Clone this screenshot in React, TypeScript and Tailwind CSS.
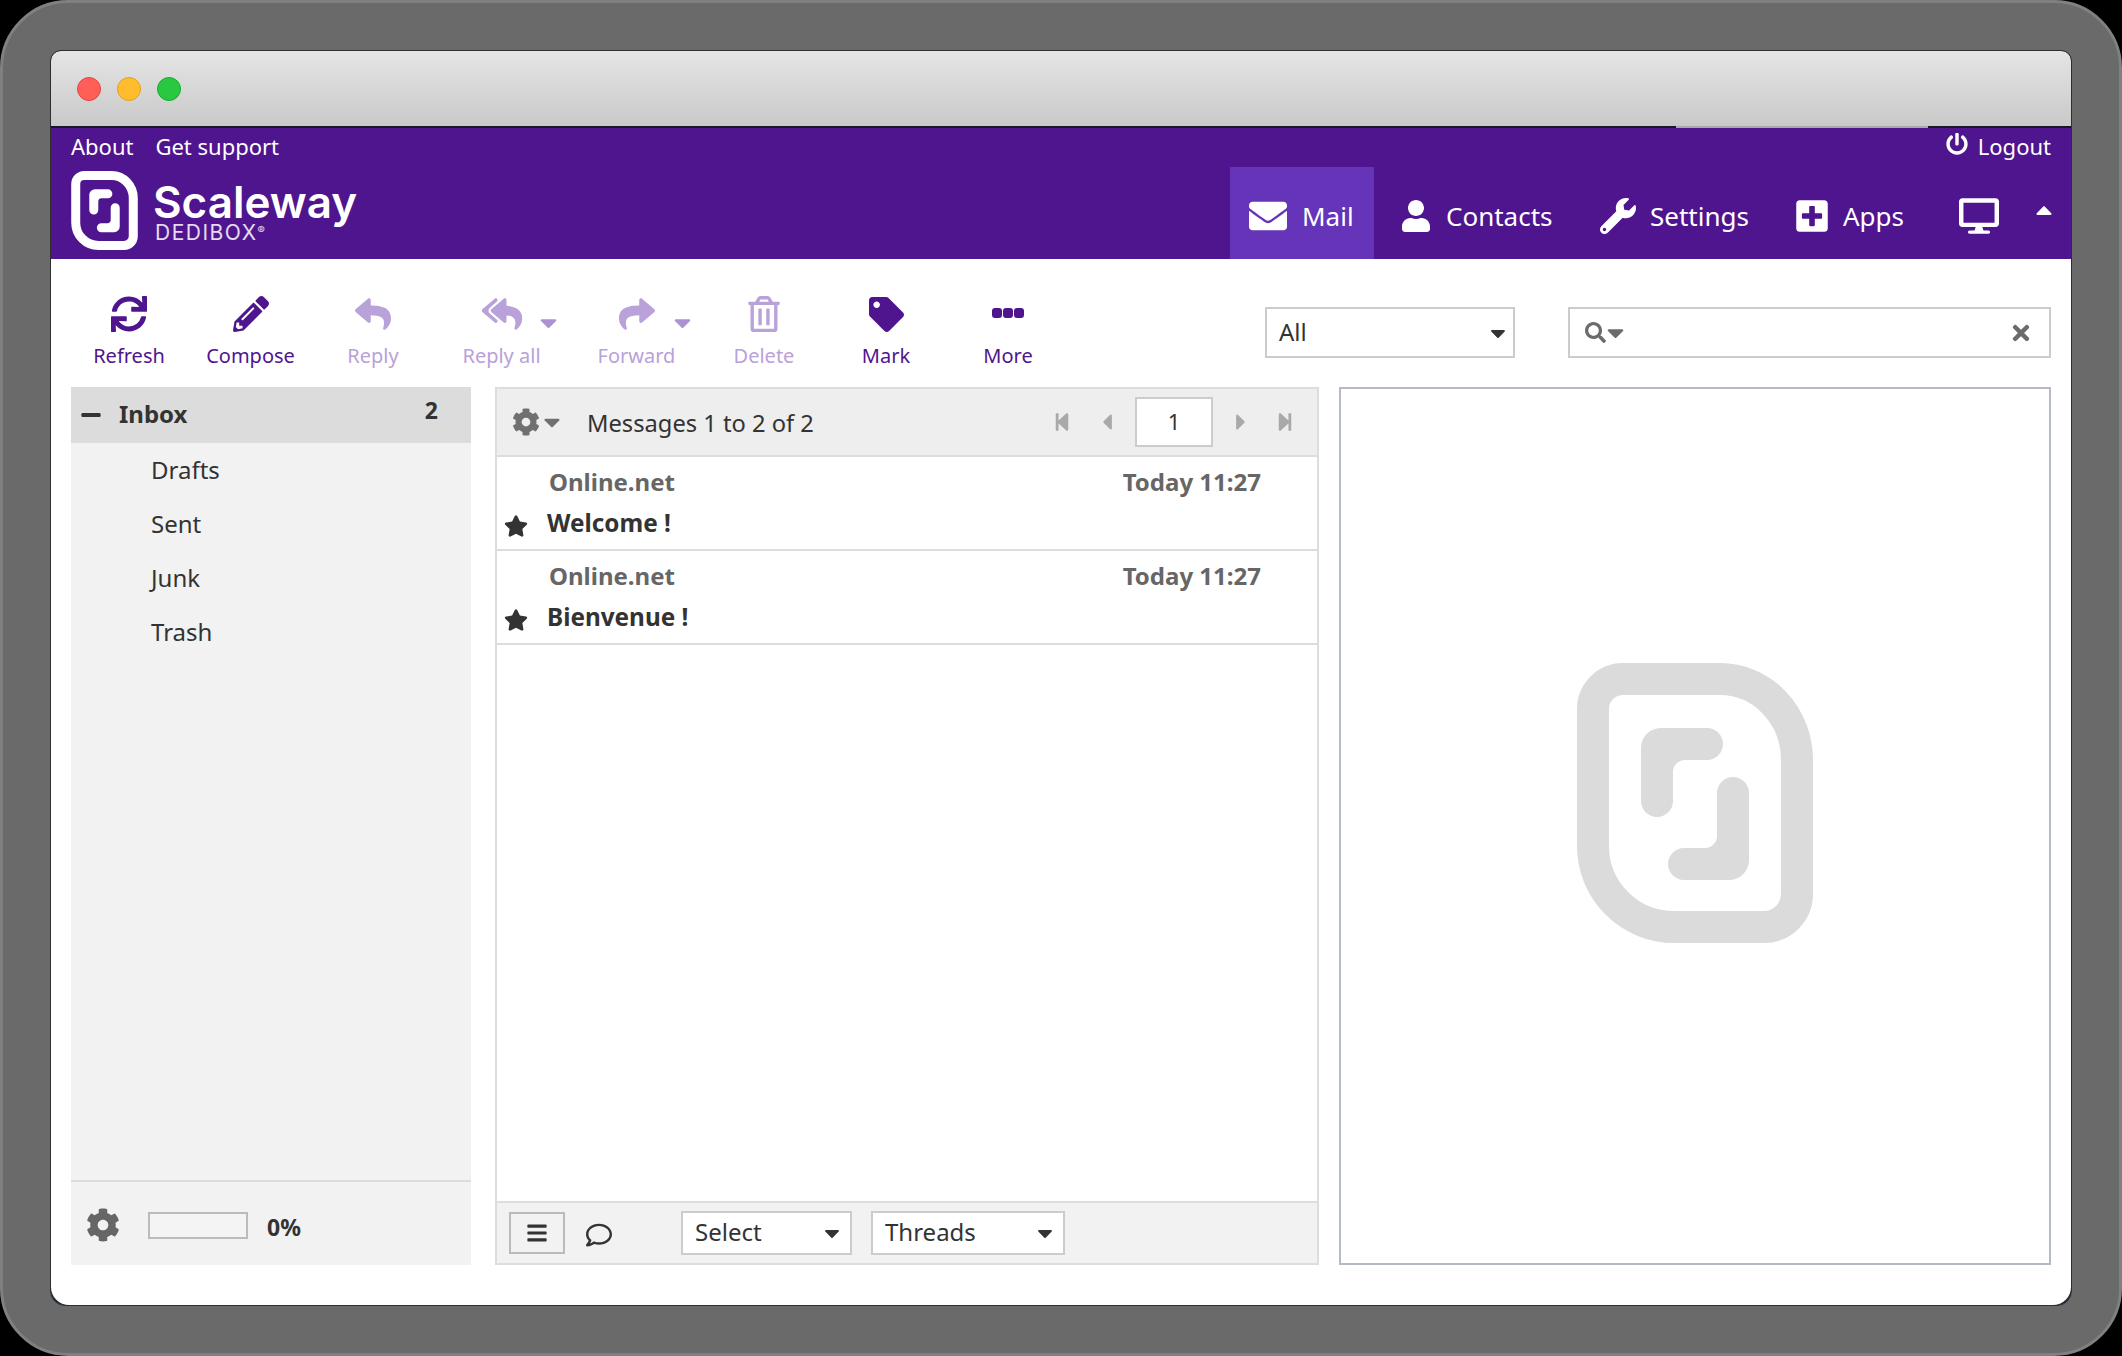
import type { ReactNode } from "react";
import {
  FaCaretDown,
  FaCaretLeft,
  FaCaretRight,
  FaCaretUp,
  FaBars,
  FaCog,
  FaDesktop,
  FaEnvelope,
  FaMinus,
  FaPencilAlt,
  FaPlusSquare,
  FaPowerOff,
  FaRegComment,
  FaRegTrashAlt,
  FaReply,
  FaReplyAll,
  FaSearch,
  FaShare,
  FaStar,
  FaStepBackward,
  FaStepForward,
  FaSync,
  FaTag,
  FaTimes,
  FaUser,
  FaWrench,
} from "react-icons/fa";

function LogoMark({ className }: { className: string }) {
  return (
    <svg viewBox="0 0 236 280" className={className}>
      <path fill="none" stroke="currentColor" strokeWidth="32" d="M16 46A30 30 0 0 1 46 16H143A77 81 0 0 1 220 97V231A33 33 0 0 1 187 264H97A81 81 0 0 1 16 183Z" />
      <path fill="currentColor" d="M64 85A20 20 0 0 1 84 65H130A16 16 0 0 1 130 97H108A12 12 0 0 0 96 109V138A16 16 0 0 1 64 138Z" />
      <path fill="currentColor" d="M172 130V197A20 20 0 0 1 152 217H107A16 16 0 0 1 107 185H128A12 12 0 0 0 140 173V130A16 16 0 0 1 172 130Z" />
    </svg>
  );
}

function MoreDots() {
  return (
    <svg viewBox="0 0 32 10" fill="currentColor" className="w-[32px] h-[10px] mb-[3px]">
      <rect x="0" width="10" height="10" rx="3" />
      <rect x="11" width="10" height="10" rx="3" />
      <rect x="22" width="10" height="10" rx="3" />
    </svg>
  );
}

const tools = [
  { label: "Refresh", icon: <FaSync className="w-[36px] h-[36px]" />, width: "w-[122px]", dim: false },
  { label: "Compose", icon: <FaPencilAlt className="w-[36px] h-[36px]" />, width: "w-[121px]", dim: false },
  { label: "Reply", icon: <FaReply className="w-[40px] h-[36px]" />, width: "w-[122px] pl-[2px]", dim: true },
  { label: "Reply all", icon: <FaReplyAll className="w-[42px] h-[36px]" />, width: "w-[137px]", dim: true, arrow: "left-[102px]" },
  { label: "Forward", icon: <FaShare className="w-[40px] h-[36px]" />, width: "w-[133px]", dim: true, arrow: "left-[99px]" },
  { label: "Delete", icon: <FaRegTrashAlt className="w-[36px] h-[36px]" />, width: "w-[122px]", dim: true },
  { label: "Mark", icon: <FaTag className="w-[35px] h-[35px]" />, width: "w-[122px]", dim: false },
  { label: "More", icon: <MoreDots />, width: "w-[122px]", dim: false },
];

const folders = ["Drafts", "Sent", "Junk", "Trash"];

const messages = ["Welcome !", "Bienvenue !"];

function NavTab({ icon, label, active, className }: { icon: ReactNode; label?: string; active?: boolean; className: string }) {
  return (
    <div className={`h-full flex items-center pt-[6px] ${active ? "bg-[#6534b8]" : ""} ${className}`}>
      {icon}
      {label && <span className="text-[26px] leading-none">{label}</span>}
    </div>
  );
}

function PickBox({ label, className }: { label: string; className: string }) {
  return (
    <div className={`bg-white border-2 border-[#cccccc] flex items-center justify-between text-[#333333] ${className}`}>
      <span className="mb-[2px]">{label}</span>
      <FaCaretDown className="w-[24px] h-[24px]" />
    </div>
  );
}

export default function App() {
  return (
    <div className="w-[2122px] h-[1356px] bg-black font-['Noto_Sans',sans-serif] overflow-hidden">
      <div className="w-full h-full rounded-[68px] bg-[#6a6a6a] border-[3px] border-[#808080] p-[48px]">
        <div className="w-full h-full bg-[#1a2a3a] rounded-t-[10px] rounded-b-[14px] overflow-hidden outline outline-1 outline-[#2e2e2e]">
          <div className="h-full bg-white rounded-b-[18px] overflow-hidden flex flex-col">
            {/* Title bar */}
            <div className="h-[75px] bg-gradient-to-b from-[#e5e5e5] to-[#c9c9c9] flex items-center gap-[16px] pl-[26px] pt-[1px] shrink-0">
              <div className="w-[24px] h-[24px] rounded-full bg-[#ff5f57] border border-[#e2463f]" />
              <div className="w-[24px] h-[24px] rounded-full bg-[#febc2e] border border-[#e1a116]" />
              <div className="w-[24px] h-[24px] rounded-full bg-[#28c840] border border-[#1aab29]" />
            </div>
            <div className="h-[2px] flex shrink-0">
              <div className="w-[1625px] bg-[#1c1526]" />
              <div className="w-[252px] bg-[#a9a9a9]" />
              <div className="flex-1 bg-[#1c1526]" />
            </div>

            {/* Purple header */}
            <div className="h-[131px] bg-[#4f158f] text-white flex flex-col shrink-0">
              <div className="h-[39px] flex items-center px-[20px] text-[22px] leading-none pb-[4px]">
                <span>About</span>
                <span className="ml-[22px]">Get support</span>
                <span className="ml-auto flex items-center gap-[10px]">
                  <FaPowerOff className="w-[22px] h-[22px] mb-[4px]" />
                  Logout
                </span>
              </div>
              <div className="h-[92px] flex items-stretch pl-[20px]">
                <div className="flex items-start pt-[4px] gap-[15px]">
                  <LogoMark className="w-[67px] h-[79px]" />
                  <div className="flex flex-col pt-[11px]">
                    <span className="text-[44px] leading-[40px] font-['Inter',sans-serif] font-semibold">Scaleway</span>
                    <span className="mt-[3px] ml-[2px] text-[21px] leading-[16px] font-['Inter',sans-serif] text-white/85 tracking-[1.5px]">
                      DEDIBOX<span className="text-[11px] align-top leading-none">®</span>
                    </span>
                  </div>
                </div>
                <div className="ml-auto flex items-stretch">
                  <NavTab active label="Mail" className="w-[144px] pl-[19px] gap-[15px]" icon={<FaEnvelope className="w-[38px] h-[38px]" />} />
                  <NavTab label="Contacts" className="w-[205px] pl-[27px] gap-[15px]" icon={<FaUser className="w-[30px] h-[32px]" />} />
                  <NavTab label="Settings" className="w-[188px] pl-[21px] gap-[14px]" icon={<FaWrench className="w-[36px] h-[36px]" />} />
                  <NavTab label="Apps" className="w-[162px] pl-[29px] gap-[15px]" icon={<FaPlusSquare className="w-[32px] h-[36px]" />} />
                  <NavTab className="w-[89px] pl-[30px]" icon={<FaDesktop className="w-[40px] h-[38px]" />} />
                  <div className="w-[53px] pl-[13px] pt-[30px]">
                    <FaCaretUp className="w-[26px] h-[26px]" />
                  </div>
                </div>
              </div>
            </div>

            {/* Toolbar */}
            <div className="h-[128px] flex items-start pl-[17px] pr-[20px] shrink-0">
              {tools.map((tool) => (
                <div
                  key={tool.label}
                  className={`relative ${tool.width} pt-[36px] flex flex-col items-center ${tool.dim ? "text-[#b9a1d9]" : "text-[#4f158f]"}`}
                >
                  <div className="h-[38px] flex items-center justify-center">{tool.icon}</div>
                  <span className="mt-[9px] text-[20px] leading-[27px]">{tool.label}</span>
                  {tool.arrow && <FaCaretDown className={`absolute top-[50px] w-[27px] h-[27px] text-[#ac92d2] ${tool.arrow}`} />}
                </div>
              ))}
              <PickBox label="All" className="ml-auto mt-[48px] w-[250px] h-[51px] pl-[12px] pr-[3px] text-[24px]" />
              <div className="ml-[53px] mt-[48px] w-[483px] h-[51px] bg-white border-2 border-[#cccccc] flex items-center pl-[15px] pr-[16px] text-[#6b6b6b]">
                <FaSearch className="w-[21px] h-[21px]" />
                <FaCaretDown className="w-[27px] h-[27px] -ml-[4px]" />
                <FaTimes className="ml-auto w-[24px] h-[24px]" />
              </div>
            </div>

            {/* Panels */}
            <div className="h-[878px] flex gap-[20px] pl-[20px] pr-[20px] shrink-0">
              {/* Folders */}
              <div className="w-[400px] mr-[4px] bg-[#f2f2f2] flex flex-col text-[#333333]">
                <div className="h-[56px] bg-[#dcdcdc] flex items-center pl-[9px] pr-[33px] text-[24px] font-bold">
                  <FaMinus className="w-[22px] h-[22px]" />
                  <span className="ml-[17px] mb-[2px]">Inbox</span>
                  <span className="ml-auto mb-[9px] text-[23px]">2</span>
                </div>
                {folders.map((name) => (
                  <div key={name} className="h-[54px] pl-[80px] flex items-center text-[24px]">
                    {name}
                  </div>
                ))}
                <div className="mt-auto h-[85px] border-t-2 border-[#dddddd] flex items-center pl-[15px] pt-[3px]">
                  <FaCog className="w-[34px] h-[34px] text-[#666666]" />
                  <div className="ml-[28px] w-[100px] h-[27px] border-2 border-[#bbbbbb] bg-[#f4f4f4]" />
                  <span className="ml-[19px] mt-[4px] text-[23px] font-bold">0%</span>
                </div>
              </div>

              {/* Message list */}
              <div className="w-[824px] border-2 border-[#dddddd] flex flex-col text-[#333333]">
                <div className="h-[68px] bg-[#eeeeee] border-b-2 border-[#dddddd] flex items-center pl-[15px] pr-[22px] text-[23.7px] shrink-0">
                  <FaCog className="w-[28px] h-[28px] text-[#707070]" />
                  <FaCaretDown className="w-[26px] h-[26px] -ml-[1px] text-[#707070]" />
                  <span className="ml-[22px] mt-[3px]">Messages 1 to 2 of 2</span>
                  <div className="ml-auto flex items-center text-[#a9a9a9]">
                    <FaStepBackward className="w-[20px] h-[20px]" />
                    <FaCaretLeft className="ml-[22px] w-[26px] h-[26px]" />
                    <div className="ml-[15px] w-[78px] h-[50px] bg-white border-2 border-[#cccccc] flex items-center justify-center text-[22px] text-[#333333] pb-[2px]">1</div>
                    <FaCaretRight className="ml-[15px] w-[26px] h-[26px]" />
                    <FaStepForward className="ml-[21px] w-[20px] h-[20px]" />
                  </div>
                </div>
                {messages.map((subject) => (
                  <div key={subject} className="h-[94px] border-b-2 border-[#dddddd] shrink-0 flex flex-col">
                    <div className="h-[50px] flex items-center justify-between pl-[52px] pr-[56px] text-[24px] font-bold text-[#666666]">
                      <span>Online.net</span>
                      <span>Today 11:27</span>
                    </div>
                    <div className="flex items-center pl-[7px] text-[24.3px] font-bold leading-[32px]">
                      <FaStar className="w-[24px] h-[24px] mt-[6px]" />
                      <span className="ml-[19px]">{subject}</span>
                    </div>
                  </div>
                ))}
                <div className="mt-auto h-[62px] bg-[#f2f2f2] border-t-2 border-[#dddddd] flex items-center pl-[12px] text-[24px] shrink-0">
                  <div className="w-[56px] h-[42px] border-2 border-[#bbbbbb] flex items-center justify-center">
                    <FaBars className="w-[22px] h-[22px]" />
                  </div>
                  <FaRegComment className="ml-[21px] w-[26px] h-[26px] mt-[3px]" />
                  <PickBox label="Select" className="ml-[69px] w-[171px] h-[44px] pl-[12px] pr-[6px]" />
                  <PickBox label="Threads" className="ml-[19px] w-[194px] h-[44px] pl-[12px] pr-[6px]" />
                </div>
              </div>

              {/* Preview */}
              <div className="flex-1 border-2 border-[#b4bac8] flex items-center justify-center">
                <LogoMark className="w-[236px] h-[280px] mb-[46px] text-[#dbdbdb]" />
              </div>
            </div>
          </div>
        </div>
      </div>
    </div>
  );
}
